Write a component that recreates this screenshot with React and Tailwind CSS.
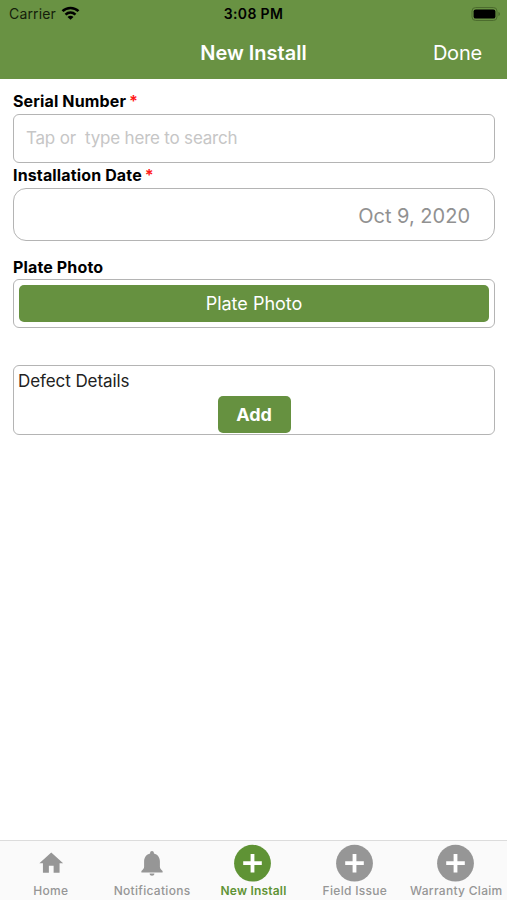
import React, { useState } from "react";
import { MdHome } from "react-icons/md";

const tabs = [
  { name: "Home", icon: "home" },
  { name: "Notifications", icon: "bell" },
  { name: "New Install", icon: "plus" },
  { name: "Field Issue", icon: "plus" },
  { name: "Warranty Claim", icon: "plus" },
];

function PlusCircle() {
  return (
    <svg viewBox="0 0 38 38" className="w-[38px] h-[38px]">
      <circle cx="18.5" cy="19.2" r="18.4" fill="currentColor" />
      <path d="M18.5 9.9v18.6M9.2 19.2h18.6" stroke="#fff" strokeWidth="3.8" />
    </svg>
  );
}

function Bell() {
  return (
    <svg viewBox="0 0 22 25" className="w-[22px] h-[25px]" fill="currentColor">
      <path d="M11 0c1.1 0 1.9.8 1.9 1.9v.5c3.7.9 6 4 6 8v5.4c0 1.7 1.2 3 2.7 4.2v1.5H.4V20c1.5-1.2 2.7-2.5 2.7-4.2v-5.4c0-4 2.3-7.1 6-8v-.5C9.100.8 9.9 0 11 0z" />
      <path d="M8.600 22.500h4.800c0 1.300-1.100 2.300-2.400 2.300s-2.400-1-2.400-2.300z" />
    </svg>
  );
}

function TabIcon({ icon }) {
  if (icon === "home") return <MdHome className="w-[28.5px] h-[28.5px] ml-px" />;
  if (icon === "bell") return <Bell />;
  return <PlusCircle />;
}

function StatusBar() {
  return (
    <div className="grid grid-cols-3 items-center h-7 text-black">
      <div className="flex items-center gap-[5px] pl-[9px] text-sm leading-none tracking-[0.15px] text-[#14200a]">
        <span>Carrier</span>
        <svg viewBox="0 0 18 14" className="w-[19px] h-[14px] -mt-[2px]" fill="none" stroke="#000" strokeWidth="2.6">
          <path d="M1 5.1C5.4.9 12.6.9 17 5.1" />
          <path d="M4 8.6c2.9-2.6 7.1-2.6 10 0" />
          <path d="M9 13.8 6 10.9c1.7-1.6 4.3-1.6 6 0z" fill="#000" stroke="none" />
        </svg>
      </div>
      <span className="text-center text-sm leading-none font-semibold tracking-[0.35px]">3:08 PM</span>
      <div className="flex justify-end pr-[6px] -mt-px">
        <svg viewBox="0 0 30 14" className="w-[30px] h-[14px]">
          <rect x="1" y="0.5" width="25" height="13" rx="3.6" fill="none" stroke="#4c6c2e" strokeWidth="1" />
          <rect x="2.6" y="2.4" width="21.8" height="9.2" rx="2.2" fill="#000" />
          <path d="M27.4 5v4c1-.3 1.6-1.1 1.6-2s-.6-1.7-1.6-2z" fill="#4c6c2e" />
        </svg>
      </div>
    </div>
  );
}

function Label({ children, required }) {
  return (
    <div className="h-[26px] flex items-center text-base font-bold tracking-[0.14px] text-black">
      <span>{children}</span>
      {required && <span className="ml-[3px] text-[#ff1a1a]">*</span>}
    </div>
  );
}

export default function App() {
  const [active, setActive] = useState("New Install");
  const [serial, setSerial] = useState("");

  return (
    <div className="w-full h-screen flex flex-col bg-white overflow-hidden font-['Inter',sans-serif]">
      <header className="h-[79px] shrink-0 bg-[#699243]">
        <StatusBar />
        <div className="grid grid-cols-3 items-center h-[49px] text-xl text-white">
          <span />
          <h1 className="text-center font-semibold">New Install</h1>
          <button className="justify-self-end pr-[25px] tracking-[-0.2px]">Done</button>
        </div>
      </header>

      <main className="flex-1 pl-[13px] pr-3 pt-[9px]">
        <Label required>Serial Number</Label>
        <input
          value={serial}
          onChange={(e) => setSerial(e.target.value)}
          placeholder="Tap or  type here to search"
          className="block w-full h-[49px] px-3 pb-0.5 border border-[#b4b4b4] rounded-md text-[17px] tracking-[-0.2px] text-black placeholder:text-[#c6c6c6] outline-none"
        />
        <div className="-mt-px">
          <Label required>Installation Date</Label>
        </div>
        <div className="h-[53px] flex items-center justify-end pr-6 pt-0.5 border border-[#b4b4b4] rounded-[13px] text-xl text-[#919191]">
          Oct 9, 2020
        </div>

        <div className="mt-[13px]">
          <Label>Plate Photo</Label>
          <div className="-mt-px h-[49px] p-[5px] border border-[#b4b4b4] rounded-md">
            <button className="w-full h-full rounded-[5px] bg-[#669140] text-white text-lg">Plate Photo</button>
          </div>
        </div>

        <div className="mt-[37px] h-[70px] border border-[#b4b4b4] rounded-md flex flex-col">
          <div className="h-[30px] px-1 pt-0.5 flex items-center text-[17px] tracking-[-0.08px] text-[#222]">
            Defect Details
          </div>
          <button className="self-center w-[73px] h-[37px] rounded-[5px] bg-[#669140] text-white text-lg font-bold">Add</button>
        </div>
      </main>

      <nav className="h-[60px] shrink-0 grid grid-cols-5 bg-[#fafafa] border-t border-[#dcdcdc]">
        {tabs.map((tab) => (
          <button
            key={tab.name}
            onClick={() => setActive(tab.name)}
            className={`flex flex-col items-center pt-[3px] ${active === tab.name ? "text-[#5f9335]" : "text-[#969696]"}`}
          >
            <span className="h-[38px] flex items-center justify-center">
              <TabIcon icon={tab.icon} />
            </span>
            <span
              className={`mt-px text-xs leading-4 whitespace-nowrap ${
                active === tab.name ? "font-semibold tracking-[0.2px]" : "font-medium tracking-[0.3px]"
              }`}
            >
              {tab.name}
            </span>
          </button>
        ))}
      </nav>
    </div>
  );
}
